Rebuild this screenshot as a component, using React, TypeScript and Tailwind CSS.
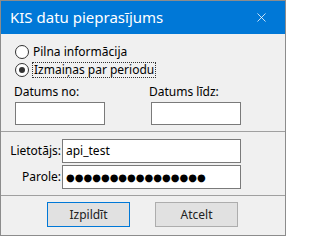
import { X } from 'lucide-react';

const font = { fontFamily: '"Noto Sans", "DejaVu Sans", sans-serif' };

const Radio = ({ checked, label, focused }: { checked?: boolean; label: string; focused?: boolean }) => (
  <div className="flex h-[16px] items-center">
    <div className="flex h-[14px] w-[14px] items-center justify-center rounded-full border border-[#333333] bg-white">
      {checked && <div className="h-[6px] w-[6px] rounded-full bg-[#333333]" />}
    </div>
    <span
      className={
        focused
          ? 'ml-[3px] border border-dotted border-[#333333] px-[1px] leading-[14px]'
          : 'ml-[4px] leading-[14px]'
      }
    >
      {label}
    </span>
  </div>
);

const Button = ({ label, primary }: { label: string; primary?: boolean }) => (
  <button
    className={
      primary
        ? 'h-[25px] w-[83px] border border-[#0078d7] bg-[#e1e1e1] text-[12px] text-[#222]'
        : 'h-[25px] w-[83px] border border-[#adadad] bg-[#e1e1e1] text-[12px] text-[#222]'
    }
  >
    {label}
  </button>
);

export default function App() {
  return (
    <div className="h-[237px] w-[286px] bg-white" style={font}>
      <div className="flex h-[236px] w-[286px] flex-col border border-[#8c8c8c] bg-[#f0f0f0] text-[12px] text-black">
        {/* title bar */}
        <div className="flex h-[33px] shrink-0 items-center justify-between bg-[#0078d7] pl-[9px] pr-[16px] text-white">
          <span className="text-[15px]">KIS datu pieprasījums</span>
          <X className="h-[15px] w-[15px]" strokeWidth={1.25} />
        </div>

        {/* radios */}
        <div className="flex flex-col gap-[2px] pl-[14px] pt-[10px]">
          <Radio label="Pilna informācija" />
          <Radio label="Izmaiņas par periodu" checked focused />
        </div>

        {/* dates */}
        <div className="mt-[6px] grid grid-cols-[135px_100px] pl-[13px]">
          <span className="leading-[16px]">Datums no:</span>
          <span className="leading-[16px]">Datums līdz:</span>
          <div className="ml-[1px] mt-[2px] h-[23px] w-[90px] border border-[#7a7a7a] bg-white" />
          <div className="ml-[2px] mt-[2px] h-[23px] w-[90px] border border-[#7a7a7a] bg-white" />
        </div>

        <div className="mt-[6px] border-t border-[#a0a0a0]" />

        {/* credentials */}
        <div className="mt-[7px] grid grid-cols-[53px_179px] items-center gap-x-[1px] gap-y-[2px] pl-[7px]">
          <span className="text-right">Lietotājs:</span>
          <div className="flex h-[24px] items-center border border-[#7a7a7a] bg-white pl-[3px]">api_test</div>
          <span className="text-right">Parole:</span>
          <div className="flex h-[24px] items-center border border-[#7a7a7a] bg-white pl-[3px] text-[10px]">
            ●●●●●●●●●●●●●●●●
          </div>
        </div>

        <div className="mt-[6px] border-t border-[#a0a0a0]" />

        {/* buttons */}
        <div className="mt-[6px] flex gap-[25px] pl-[46px]">
          <Button label="Izpildīt" primary />
          <Button label="Atcelt" />
        </div>
      </div>
    </div>
  );
}
